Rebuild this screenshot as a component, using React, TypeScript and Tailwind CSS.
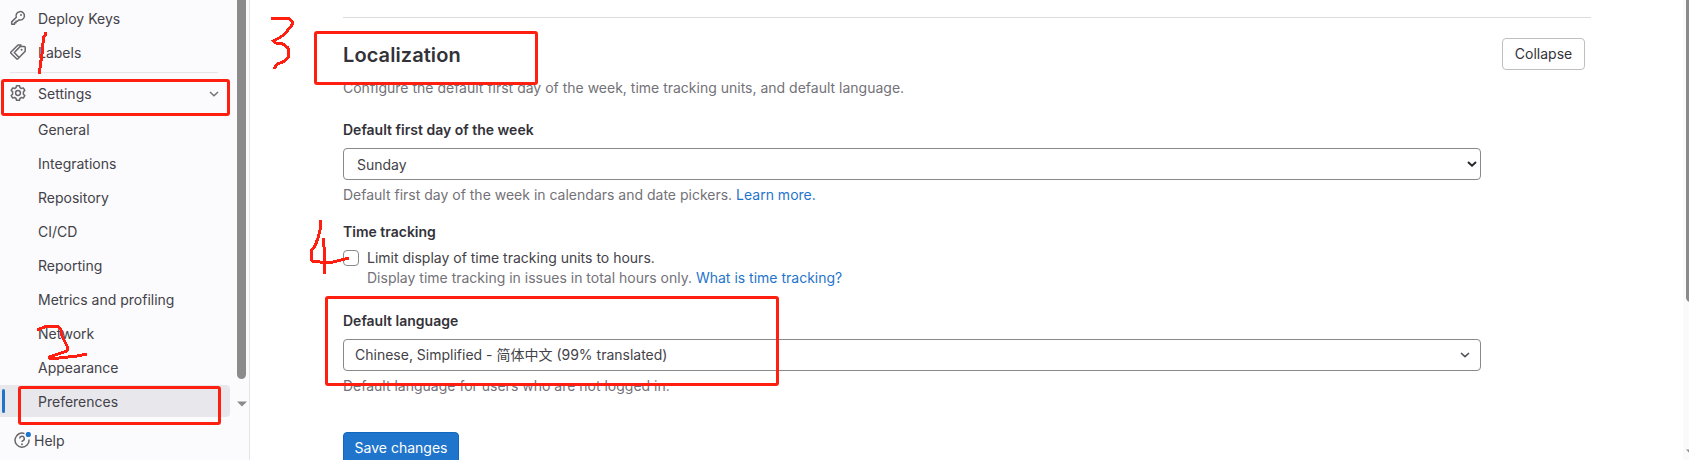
import type { ReactNode } from "react";

const subItems = [
  "General",
  "Integrations",
  "Repository",
  "CI/CD",
  "Reporting",
  "Metrics and profiling",
  "Network",
  "Appearance",
];

function Icon({ children }: { children: ReactNode }) {
  return (
    <svg
      viewBox="0 0 16 16"
      className="h-4 w-4 shrink-0 text-[#68676d]"
      fill="none"
      stroke="currentColor"
      strokeWidth="1.5"
      strokeLinejoin="round"
    >
      {children}
    </svg>
  );
}

function KeyIcon() {
  return (
    <Icon>
      <path d="M6.300 7.300a4.200 4.200 0 1 1 2.600 2.500L7.500 11.200H6v1.500H4.500v1.600H1.700v-2.400z" />
      <circle cx="11" cy="5" r="1" fill="currentColor" stroke="none" />
    </Icon>
  );
}

function LabelsIcon() {
  return (
    <Icon>
      <path d="M11.500 1H8L1 8a.9.9 0 0 0 0 1.300l5.600 5.400a.9.900 0 0 0 1.300 0l7.300-7.500V3.300a.9.900 0 0 0-.9-.9h-4L4.800 8" />
      <path d="M4.800 8l-.5.600 4.500 4.700" />
      <circle cx="11.600" cy="5.700" r="1" fill="currentColor" stroke="none" />
    </Icon>
  );
}

function SettingsIcon() {
  return (
    <Icon>
      <path d="M6.500.800h3l.5 1.900 1.400.800 1.900-.6 1.500 2.500-1.400 1.400v2.400l1.400 1.400-1.500 2.500-1.900-.6-1.400.8-.5 1.900h-3L6 13.300l-1.400-.8-1.900.6-1.500-2.500 1.400-1.400V6.800L1.200 5.400l1.500-2.500 1.900.6L6 2.700z" />
      <circle cx="8" cy="8" r="2.400" />
    </Icon>
  );
}

function Chevron({ className }: { className: string }) {
  return (
    <svg viewBox="0 0 10 6" className={className} fill="none" stroke="currentColor">
      <path d="M1 1l4 3.700L9 1" />
    </svg>
  );
}

function NavRow({ icon, label, end }: { icon?: ReactNode; label: string; end?: ReactNode }) {
  return (
    <div className="flex h-8 shrink-0 items-center pr-[10px] pl-[10px]">
      <div className="w-7">{icon}</div>
      <span className="flex-1">{label}</span>
      {end}
    </div>
  );
}

function Sidebar() {
  return (
    <aside className="flex w-[250px] shrink-0 flex-col border-r border-[#e4e3e8] bg-[#fbfafd]">
      <div className="flex h-[419px] shrink-0">
        <nav className="flex w-[230px] flex-col pt-[2px]">
          <NavRow icon={<KeyIcon />} label="Deploy Keys" />
          <div className="h-0.5" />
          <NavRow icon={<LabelsIcon />} label="Labels" />
          <div className="mt-1 mr-3 mb-1 ml-[10px] h-px shrink-0 bg-[#e6e5ea]" />
          <NavRow
            icon={<SettingsIcon />}
            label="Settings"
            end={<Chevron className="mt-px mr-px h-[6px] w-[10px] stroke-[1.500] text-[#737278]" />}
          />
          <div className="mt-1 flex flex-col gap-0.5">
            {subItems.map((s) => (
              <NavRow key={s} label={s} />
            ))}
            <div className="flex h-8 items-center rounded-r bg-[#e8e7ec] pl-[2px]">
              <div className="h-6 w-[3px] rounded-full bg-[#1f75cb]" />
              <span className="pl-[33px]">Preferences</span>
            </div>
          </div>
        </nav>
        <div className="ml-[7px] flex w-[9px] flex-col items-center">
          <div className="h-[379px] w-[9px] rounded-b-full bg-[#8b8b8b]" />
          <svg viewBox="0 0 10 6" className="mt-[22px] h-[6px] w-[10px]" fill="#8b8b8b">
            <path d="M0 .5h10L5 5.500z" />
          </svg>
        </div>
      </div>
      <div className="flex h-[41px] items-center gap-[3px] pt-[2px] pl-[14px]">
        <svg viewBox="0 0 17 17" className="h-[17px] w-[17px]" fill="none" stroke="#68676d" strokeWidth="1.5">
          <path d="M10.500 1.600A7 7 0 1 0 15 7.500" />
          <path d="M5.700 6.500A2.300 2.300 0 1 1 8.900 8.700q-.9.400-.9 1.400" />
          <circle cx="8" cy="12.200" r=".95" fill="#68676d" stroke="none" />
          <circle cx="14.300" cy="2.500" r="2.600" fill="#1f75cb" stroke="none" />
        </svg>
        <span>Help</span>
      </div>
    </aside>
  );
}

function Main() {
  return (
    <main className="flex flex-1 overflow-hidden">
      <div className="ml-[93px] flex w-[1248px] shrink-0 flex-col pt-[17px]">
        <div className="h-px shrink-0 bg-[#dcdcde]" />
        <div className="flex h-[84px] shrink-0 items-start justify-between pr-[6px]">
          <div>
            <h2 className="mt-[23px] text-[20px] leading-7 font-semibold tracking-[0.08px] text-[#333238]">Localization</h2>
            <p className="mt-[9px] leading-5 text-[#737278]">
              Configure the default first day of the week, time tracking units, and default language.
            </p>
          </div>
          <button className="mt-5 h-8 w-[83px] rounded border border-[#bfbfc3] pb-px text-[#333238]">Collapse</button>
        </div>
        <div className="flex w-[1138px] flex-col">
          <label className="mt-[18px] leading-5 font-semibold text-[#333238]">Default first day of the week</label>
          <div className="mt-[8px] flex h-8 items-center justify-between rounded border border-[#89888d] pr-[3px] pl-[13px]">
            <span>Sunday</span>
            <Chevron className="h-[6px] w-[10px] stroke-2 text-[#28272d]" />
          </div>
          <p className="mt-[5px] leading-5 text-[#737278]">
            Default first day of the week in calendars and date pickers. <a className="text-[#1f75cb]">Learn more.</a>
          </p>
          <p className="mt-[17px] leading-5 font-semibold text-[#333238]">Time tracking</p>
          <div className="mt-[6px] flex gap-2">
            <div className="mt-[2px] h-4 w-4 rounded border border-[#89888d]" />
            <div className="leading-5">
              <p>Limit display of time tracking units to hours.</p>
              <p className="text-[#737278]">
                Display time tracking in issues in total hours only.{" "}
                <a className="text-[#1f75cb]">What is time tracking?</a>
              </p>
            </div>
          </div>
          <label className="mt-[23px] leading-5 font-semibold text-[#333238]">Default language</label>
          <div className="mt-[8px] flex h-8 items-center justify-between rounded border border-[#89888d] pr-[10px] pl-[11px]">
            <span className="pb-px">Chinese, Simplified - 简体中文 (99% translated)</span>
            <Chevron className="h-[6px] w-[10px] stroke-[1.600] text-[#535158]" />
          </div>
          <p className="mt-[5px] leading-5 text-[#737278]">Default language for users who are not logged in.</p>
          <button className="mt-[36px] h-8 w-[116px] shrink-0 rounded border border-[#1068bf] bg-[#1f75cb] pb-px text-white">
            Save changes
          </button>
        </div>
      </div>
      <div className="ml-auto flex w-[6px] shrink-0 flex-col overflow-hidden bg-[#fafafa] pl-[3px]">
        <div className="h-[302px] w-[9px] shrink-0 rounded-b-full bg-[#8b8b8b]" />
        <svg viewBox="0 0 10 6" className="mt-[147px] h-[6px] w-[10px] shrink-0" fill="#8b8b8b">
          <path d="M0 .5h10L5 5.500z" />
        </svg>
      </div>
    </main>
  );
}

function Annotations() {
  return (
    <div className="pointer-events-none absolute inset-0">
      <div className="absolute top-[79px] left-[1px] h-[37px] w-[229px] rounded-[3px] border-[3px] border-[#ff1f10]" />
      <div className="absolute top-[386px] left-[18px] h-[39px] w-[203px] rounded-[3px] border-[3px] border-[#ff1f10]" />
      <div className="absolute top-[31px] left-[314px] h-[54px] w-[224px] rounded-[3px] border-[3px] border-[#ff1f10]" />
      <div className="absolute top-[296px] left-[325px] h-[90px] w-[454px] rounded-[3px] border-[3px] border-[#ff1f10]" />
      <svg
        viewBox="0 0 1689 460"
        className="absolute inset-0 h-[460px] w-[1689px]"
        fill="none"
        stroke="#ff1f10"
        strokeWidth="3"
        strokeLinejoin="round"
        shapeRendering="crispEdges"
      >
        <path d="M45.500 32v3l-2 2-1 13-1 8-1 5-1 11" />
        <path d="M37 330l5-2 5-2h11l3 4 1 6 3 6 3 6-1 3-6 2-12 4v1h10l9-1 9-1 10-2" />
        <path d="M271 18h17l4 3v4l-4 5-3 4-6 4-6 3 3 2 7 1 5 4 1 5-1 5-5 4-6 2-3 5" />
        <path d="M320 220v10l-2 8-3 8-4 5v6l1 4 8 1h13l8-2 8-2M323 238l1 9v27" />
      </svg>
    </div>
  );
}

export default function App() {
  return (
    <div className="relative flex h-[460px] w-[1689px] overflow-hidden bg-white font-[Inter,'Noto_Sans_CJK_SC',sans-serif] text-[14px] text-[#434248]">
      <Sidebar />
      <Main />
      <Annotations />
    </div>
  );
}
